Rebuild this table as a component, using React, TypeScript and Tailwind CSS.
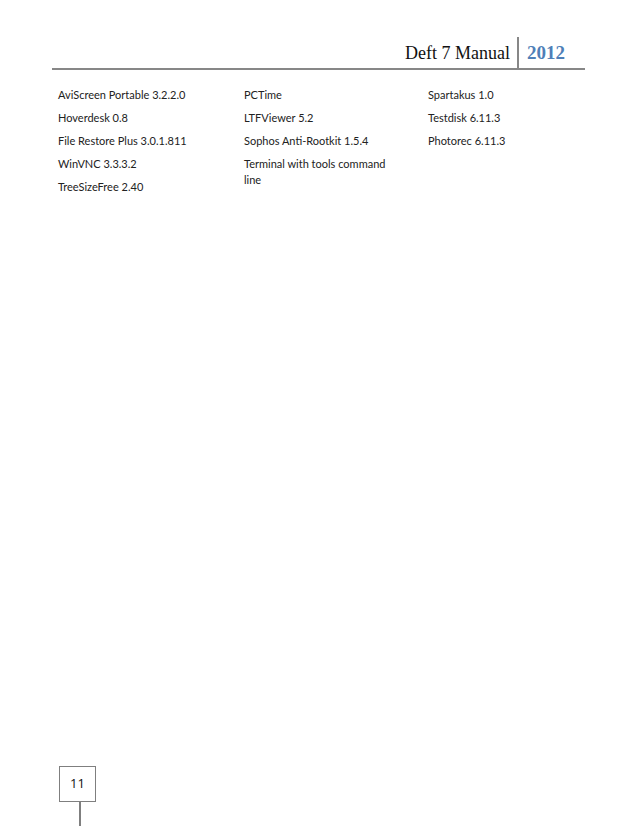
const columns: string[][] = [
  ["AviScreen Portable 3.2.2.0", "Hoverdesk 0.8", "File Restore Plus 3.0.1.811", "WinVNC 3.3.3.2", "TreeSizeFree 2.40"],
  ["PCTime", "LTFViewer 5.2", "Sophos Anti-Rootkit 1.5.4", "Terminal with tools command line"],
  ["Spartakus 1.0", "Testdisk 6.11.3", "Photorec 6.11.3"],
];

export default function App() {
  return (
    <div className="w-[638px] h-[826px] bg-white flex flex-col overflow-hidden">
      {/* running header */}
      <div className="mt-[37px] ml-[52px] w-[533px] h-[33px] border-b-2 border-[#878787] flex justify-end items-stretch">
        <div className="flex items-center pt-[1px] pr-[7px] text-[18px] text-[#111] font-['Liberation_Serif',serif]">
          Deft 7 Manual
        </div>
        <div className="w-[2px] bg-[#878787]" />
        <div className="flex items-center pt-[1px] pl-[8px] pr-[20px] text-[19px] font-bold text-[#4f7fb8] font-['Liberation_Serif',serif]">
          2012
        </div>
      </div>

      {/* tool list */}
      <div className="mt-[17px] ml-[58px] grid grid-cols-[186px_184px_1fr] text-[11px] leading-[16px] text-[#222] font-['Lato',sans-serif]">
        {columns.map((col, i) => (
          <div key={i} className="flex flex-col gap-[7px]">
            {col.map((item) => (
              <div key={item} className="w-[150px]">{item}</div>
            ))}
          </div>
        ))}
      </div>

      {/* page number */}
      <div className="mt-auto ml-[59px] flex flex-col items-start">
        <div className="w-[37px] h-[36px] border-[1.5px] border-[#7f7f7f] flex items-center justify-center text-[13px] text-[#111] font-['Open_Sans',sans-serif]">
          11
        </div>
        <div className="ml-[20px] w-[1.5px] h-[24px] bg-[#7f7f7f]" />
      </div>
    </div>
  );
}
